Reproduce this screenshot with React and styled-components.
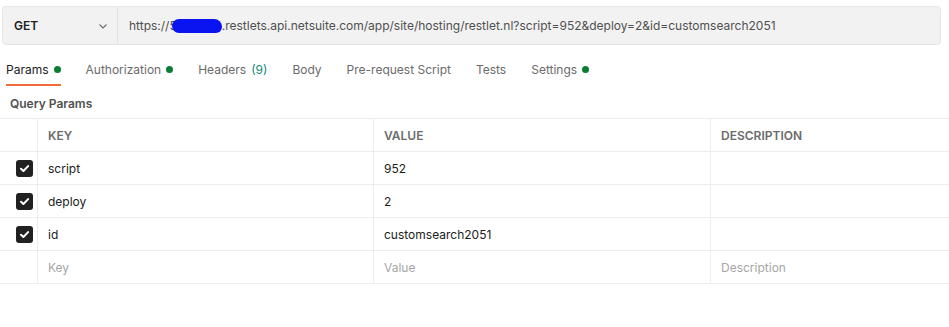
import React from 'react'
import styled, { createGlobalStyle } from 'styled-components'

const GlobalStyle = createGlobalStyle`
  body {
    margin: 0;
    background: #ffffff;
    font-family: Inter, "Noto Sans", sans-serif;
  }
`;

const params = [
  { key: 'script', value: '952' },
  { key: 'deploy', value: '2' },
  { key: 'id', value: 'customsearch2051' },
];

const tabs = [
  { label: 'Params', dot: true, active: true },
  { label: 'Authorization', dot: true },
  { label: 'Headers', count: '(9)' },
  { label: 'Body' },
  { label: 'Pre-request Script' },
  { label: 'Tests' },
  { label: 'Settings', dot: true },
];

function Chevron() {
  return (
    <svg width="10" height="10" viewBox="0 0 10 10">
      <path d="M1.5 3.5 L5 7 L8.5 3.5" fill="none" stroke="#6b6b6b" strokeWidth="1.1" />
    </svg>
  );
}

function Check() {
  return (
    <svg width="11" height="11" viewBox="0 0 10 10">
      <path d="M1.8 5.2 L4 7.3 L8.3 2.8" fill="none" stroke="#ffffff" strokeWidth="1.8" strokeLinecap="round" strokeLinejoin="round" />
    </svg>
  );
}

function App() {
  return (
    <Page>
      <GlobalStyle />
      <UrlBar>
        <Method>
          GET
          <Chevron />
        </Method>
        <Url>
          https://5<Redact />.restlets.api.netsuite.com/app/site/hosting/restlet.nl?script=952&amp;deploy=2&amp;id=customsearch2051
        </Url>
      </UrlBar>

      <Tabs>
        {tabs.map(t => (
          <Tab key={t.label} active={t.active}>
            {t.label}
            {t.count && <Count>{t.count}</Count>}
            {t.dot && <Dot />}
          </Tab>
        ))}
      </Tabs>

      <SectionTitle>Query Params</SectionTitle>

      <Table>
        <Row>
          <CheckCell />
          <HeadCell>KEY</HeadCell>
          <HeadCell>VALUE</HeadCell>
          <HeadCell>DESCRIPTION</HeadCell>
        </Row>
        {params.map(p => (
          <Row key={p.key}>
            <CheckCell>
              <Box><Check /></Box>
            </CheckCell>
            <Cell>{p.key}</Cell>
            <Cell>{p.value}</Cell>
            <Cell />
          </Row>
        ))}
        <Row>
          <CheckCell />
          <Cell placeholder>Key</Cell>
          <Cell placeholder>Value</Cell>
          <Cell placeholder>Description</Cell>
        </Row>
      </Table>
    </Page>
  )
}

export default App;

const Page = styled.div`
  width: 949px;
  height: 327px;
  padding-top: 6px;
  box-sizing: border-box;
  overflow: hidden;
`;

const UrlBar = styled.div`
  display: flex;
  margin-left: 2px;
  width: 939px;
  height: 39px;
  box-sizing: border-box;
  border: 1px solid #e6e6e6;
  border-radius: 4px;
  background: #f2f2f2;
`;

const Method = styled.div`
  display: flex;
  align-items: center;
  justify-content: space-between;
  width: 115px;
  box-sizing: border-box;
  padding: 0 9px 0 11px;
  border-right: 1px solid #e2e2e2;
  font-size: 12px;
  font-weight: 600;
  color: #212121;
`;

const Url = styled.div`
  display: flex;
  align-items: center;
  padding-left: 11px;
  font-size: 12px;
  color: #505050;
  white-space: nowrap;
`;

const Redact = styled.span`
  display: inline-block;
  width: 50px;
  height: 14px;
  margin: 0 0 0 -5px;
  border-radius: 8px 9px 7px 8px;
  background: #0a14f0;
`;

const Tabs = styled.div`
  display: flex;
  gap: 25px;
  margin-top: 10px;
  padding-left: 6px;
  height: 31px;
`;

const Tab = styled.div`
  display: flex;
  align-items: center;
  height: 100%;
  box-sizing: border-box;
  font-size: 12px;
  color: ${p => (p.active ? '#212121' : '#6b6b6b')};
  border-bottom: 2px solid ${p => (p.active ? '#f26b3a' : 'transparent')};
`;

const Count = styled.span`
  margin-left: 5px;
  color: #0f8a74;
`;

const Dot = styled.span`
  width: 7px;
  height: 7px;
  margin-left: 5px;
  border-radius: 50%;
  background: #0a7d33;
`;

const SectionTitle = styled.div`
  height: 28px;
  padding-top: 4px;
  line-height: 28px;
  padding-left: 10px;
  font-size: 12px;
  font-weight: 600;
  color: #505050;
`;

const Table = styled.div`
  border-top: 1px solid #ededed;
`;

const Row = styled.div`
  display: grid;
  grid-template-columns: 38px 336px 337px 1fr;
  height: 33px;
  box-sizing: border-box;
  border-bottom: 1px solid #ededed;
`;

const CheckCell = styled.div`
  display: flex;
  align-items: center;
  justify-content: center;
  border-right: 1px solid #ededed;
  padding-left: 11px;
`;

const Box = styled.div`
  display: flex;
  align-items: center;
  justify-content: center;
  width: 17px;
  height: 17px;
  border-radius: 3px;
  background: #212121;
`;

const HeadCell = styled.div`
  display: flex;
  align-items: center;
  padding-left: 10px;
  border-right: 1px solid #ededed;
  font-size: 12px;
  font-weight: 600;
  color: #6b6b6b;
  &:last-child { border-right: none; }
`;

const Cell = styled.div`
  display: flex;
  align-items: center;
  padding-left: 10px;
  border-right: 1px solid #ededed;
  font-size: 12px;
  color: ${p => (p.placeholder ? '#a6a6a6' : '#212121')};
  &:last-child { border-right: none; }
`;
